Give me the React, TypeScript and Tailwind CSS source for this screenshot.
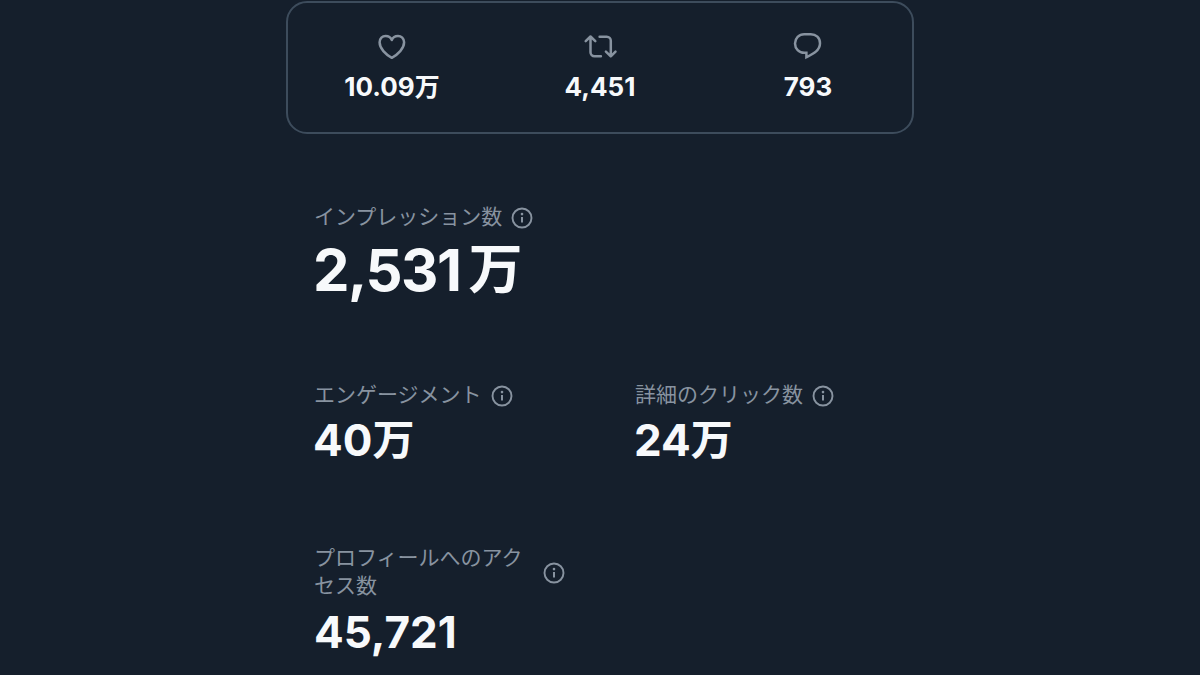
import React from 'react';

function InfoIcon() {
  return (
    <svg className="w-[22px] h-[22px] mt-px shrink-0 text-[#8893a0]" fill="none" stroke="currentColor" viewBox="0 0 22 22">
      <circle cx="11" cy="11" r="9.5" strokeWidth={1.9} />
      <circle cx="11" cy="7.1" r="1.3" fill="currentColor" stroke="none" />
      <path strokeWidth={2} d="M11 9.9v5.6" />
    </svg>
  );
}

function HeartIcon() {
  return (
    <svg className="w-9 h-9" fill="none" stroke="currentColor" strokeWidth={2.5} strokeLinejoin="round" viewBox="0 0 36 36">
      <path d="M17.8 29.8C11.6 26.5 5.6 20.5 5.6 14.3 5.6 10.5 8.4 8 11.6 8c2.8 0 5.2 1.5 6.2 4 1-2.5 3.4-4 6.2-4 3.2 0 6.1 2.5 6.1 6.3 0 6.2-6.1 12.2-12.3 15.5z" />
    </svg>
  );
}

function RetweetIcon() {
  return (
    <svg className="w-9 h-9" fill="none" stroke="currentColor" strokeWidth={2.5} strokeLinecap="round" strokeLinejoin="round" viewBox="0 0 36 36">
      <path d="M3.7 13.2l4.8-4.7 4.8 4.7M8.5 8.8v15.5a4 4 0 0 0 4 4h6.4" />
      <path d="M17.6 8.7h7.2a4 4 0 0 1 4 4v15.5M23.9 23.7l4.9 4.7 4.7-4.7" />
    </svg>
  );
}

function ReplyIcon() {
  return (
    <svg className="w-9 h-9" fill="none" stroke="currentColor" strokeWidth={2.5} viewBox="0 0 36 36">
      <path d="M14.2 24.8h2.2v4.4c6.8-3.4 13.6-6.7 13.6-14 0-5.4-4-9-9.2-9h-6.6C9 6.2 5 10.3 5 15.5s4 9.3 9.2 9.3z" />
    </svg>
  );
}

const counts = [
  { id: 'likes', icon: <HeartIcon />, value: '10.09', unit: '万' },
  { id: 'retweets', icon: <RetweetIcon />, value: '4,451', unit: '' },
  { id: 'replies', icon: <ReplyIcon />, value: '793', unit: '' },
];

export default function App() {
  return (
    <div className="w-[1200px] h-[675px] overflow-hidden bg-[#151f2c] font-['Inter','Noto_Sans_CJK_JP',sans-serif]">
      <main className="w-[628px] mx-auto pt-px">
        {/* Likes, retweets, replies */}
        <div className="grid grid-cols-3 h-[133px] pt-[25px] border-2 border-[#3d4c5c] rounded-[21px]">
          {counts.map((item) => (
            <div key={item.id} className="flex flex-col items-center text-[#8893a0]">
              {item.icon}
              <p className="mt-[3px] flex text-[26px] leading-10 font-bold text-[#f7f9fb]">
                {item.value}
                {item.unit && <span className="text-[25px]">{item.unit}</span>}
              </p>
            </div>
          ))}
        </div>

        <div className="px-7 text-[21px] leading-7 text-[#8893a0]">
          {/* Impressions */}
          <section className="mt-[69px]">
            <h2 className="flex items-center gap-[9px]">
              インプレッション数
              <InfoIcon />
            </h2>
            <p className="-ml-px mt-[3px] flex text-[58px] leading-[72px] font-bold tracking-[-1.5px] text-[#f7f9fb]">
              2,531<span className="ml-2 text-[54px]">万</span>
            </p>
          </section>

          <div className="mt-[75px] grid grid-cols-[321px_1fr]">
            <section>
              <h2 className="flex items-center gap-[9px]">
                エンゲージメント
                <InfoIcon />
              </h2>
              <p className="-ml-px mt-[3px] flex text-[44px] leading-14 font-bold text-[#f7f9fb]">
                40<span className="text-[42px]">万</span>
              </p>
            </section>
            <section>
              <h2 className="flex items-center gap-[9px]">
                詳細のクリック数
                <InfoIcon />
              </h2>
              <p className="-ml-px mt-[3px] flex text-[44px] leading-14 font-bold text-[#f7f9fb]">
                24<span className="text-[42px]">万</span>
              </p>
            </section>
          </div>

          {/* Profile visits */}
          <section className="mt-[76px]">
            <h2 className="flex items-center gap-[9px]">
              <span className="w-[220px]">
                プロフィールへのアク
                <br />
                セス数
              </span>
              <InfoIcon />
            </h2>
            <p className="mt-1 text-[44px] leading-14 font-bold text-[#f7f9fb]">45,721</p>
          </section>
        </div>
      </main>
    </div>
  );
}
